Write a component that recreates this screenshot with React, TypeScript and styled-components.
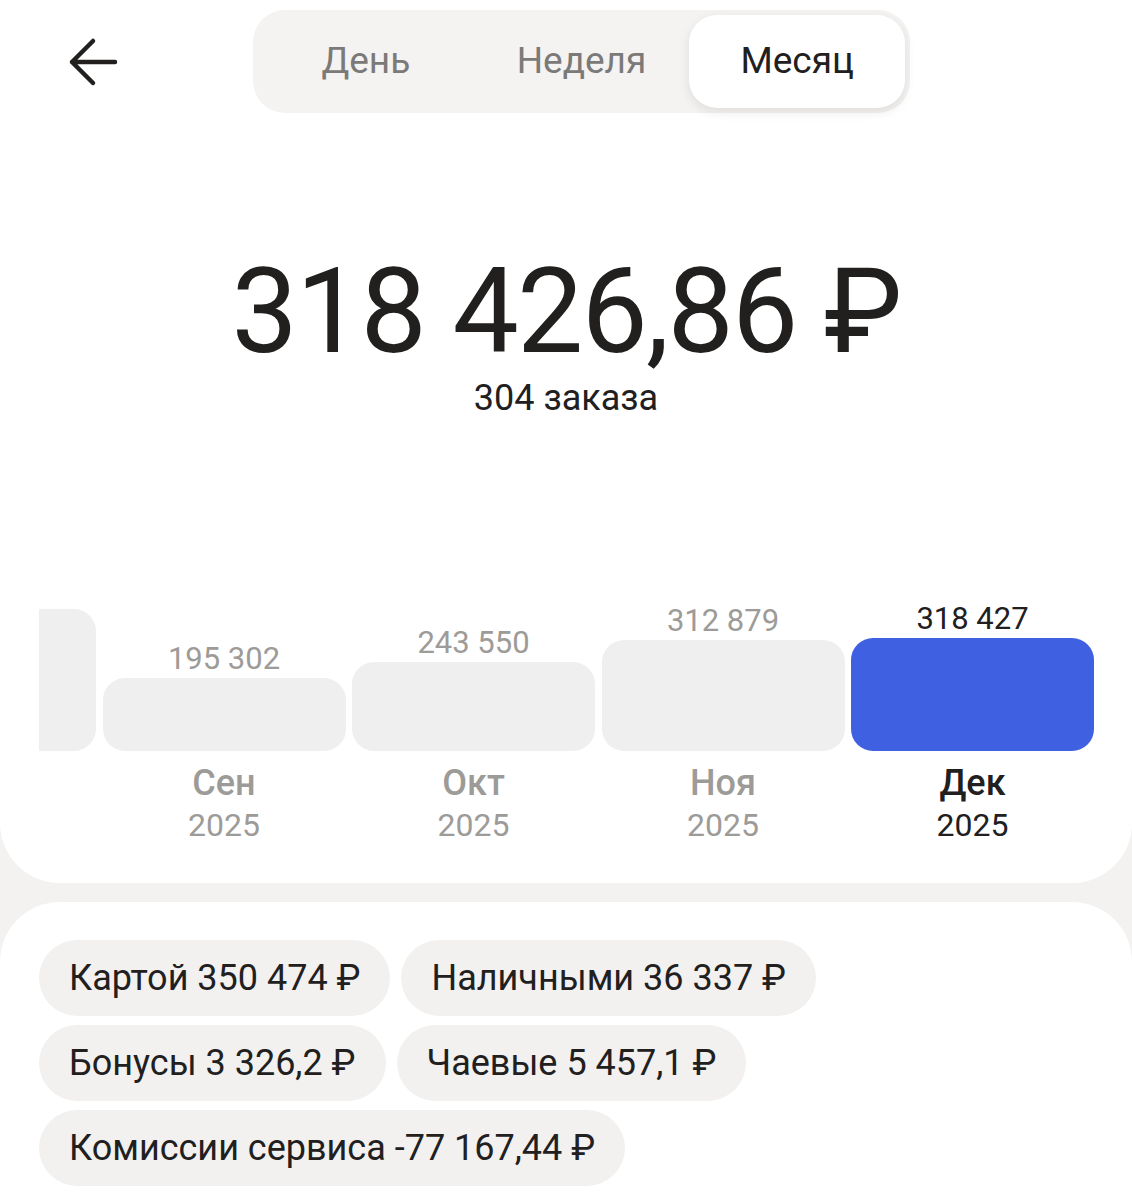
import React from "react";
import styled, { createGlobalStyle } from "styled-components";

const GlobalStyle = createGlobalStyle`
  html, body {
    margin: 0;
    padding: 0;
    background: #f3f2f0;
  }
  body {
    font-family: Roboto, "Noto Sans", "Liberation Sans", sans-serif;
    color: #21201f;
  }
  * { box-sizing: border-box; }
`;

const Page = styled.div`
  width: 1132px;
  min-height: 1200px;
  display: flex;
  flex-direction: column;
`;

const TopCard = styled.section`
  background: #ffffff;
  border-radius: 0 0 60px 60px;
  padding: 10px 0 38px;
  display: flex;
  flex-direction: column;
`;

const Header = styled.header`
  display: flex;
  align-items: center;
  padding-left: 64px;
`;

const BackButton = styled.button`
  width: 58px;
  height: 58px;
  border: 0;
  padding: 0;
  background: none;
  display: flex;
  align-items: center;
  justify-content: center;
  margin-right: 131px;
  color: #21201f;
`;

const Segmented = styled.div`
  width: 657px;
  height: 103px;
  padding: 5px;
  border-radius: 32px;
  background: #f4f3f1;
  display: grid;
  grid-template-columns: repeat(3, 1fr);
`;

const Segment = styled.div<{ $active?: boolean }>`
  display: flex;
  align-items: center;
  justify-content: center;
  padding-bottom: 3px;
  border-radius: 28px;
  font-size: 37px;
  color: ${(p) => (p.$active ? "#21201f" : "#7b7a78")};
  background: ${(p) => (p.$active ? "#ffffff" : "transparent")};
  box-shadow: ${(p) => (p.$active ? "0 4px 12px rgba(0,0,0,0.09)" : "none")};
`;

const Total = styled.div`
  margin-top: 140px;
  text-align: center;
  font-size: 118px;
  line-height: 118px;
  letter-spacing: -1.8px;
  color: #21201f;
`;

const Orders = styled.div`
  margin-top: 5px;
  text-align: center;
  font-size: 36px;
  line-height: 44px;
  color: #21201f;
`;

const ChartViewport = styled.div`
  margin: 152px 38px 0 39px;
  display: flex;
  justify-content: flex-end;
  align-items: flex-end;
  gap: 6.5px;
  overflow: hidden;
`;

const Column = styled.div`
  flex: 0 0 243px;
  display: flex;
  flex-direction: column;
  align-items: stretch;
  text-align: center;
`;

const Value = styled.div<{ $active?: boolean }>`
  font-size: 31px;
  line-height: 36px;
  min-height: 36px;
  margin-bottom: 1px;
  color: ${(p) => (p.$active ? "#21201f" : "#9d9b98")};
  white-space: nowrap;
`;

const Bar = styled.div<{ $active?: boolean }>`
  border-radius: 22px;
  background: ${(p) => (p.$active ? "#3f60e0" : "#efefef")};
`;

const Month = styled.div<{ $active?: boolean }>`
  margin-top: 10px;
  font-size: 36px;
  line-height: 44px;
  min-height: 44px;
  font-weight: 500;
  color: ${(p) => (p.$active ? "#21201f" : "#9d9b98")};
`;

const Year = styled.div<{ $active?: boolean }>`
  font-size: 32px;
  line-height: 40px;
  min-height: 40px;
  color: ${(p) => (p.$active ? "#21201f" : "#9d9b98")};
`;

const BottomCard = styled.section`
  flex: 1;
  margin-top: 19px;
  background: #ffffff;
  border-radius: 60px 60px 0 0;
  padding: 38px 39px;
`;

const Chips = styled.div`
  display: flex;
  flex-wrap: wrap;
  gap: 9px 11px;
  max-width: 820px;
`;

const Chip = styled.div`
  height: 76px;
  padding: 0 30px;
  border-radius: 38px;
  background: #f2f1ef;
  display: flex;
  align-items: center;
  font-size: 36px;
  color: #21201f;
  white-space: nowrap;
`;

const BackArrow = () => (
  <svg width="52" height="52" viewBox="0 0 52 52" fill="none">
    <path
      d="M48 26H5M26 5L5 26L26 47"
      stroke="currentColor"
      strokeWidth="4.5"
      strokeLinecap="round"
      strokeLinejoin="round"
    />
  </svg>
);

type MonthData = {
  key: string;
  value: string;
  bar: number;
  month: string;
  year: string;
  active?: boolean;
};

const months: MonthData[] = [
  { key: "aug", value: "", bar: 142, month: "", year: "" },
  { key: "sep", value: "195 302", bar: 73, month: "Сен", year: "2025" },
  { key: "oct", value: "243 550", bar: 89, month: "Окт", year: "2025" },
  { key: "nov", value: "312 879", bar: 111, month: "Ноя", year: "2025" },
  { key: "dec", value: "318 427", bar: 113, month: "Дек", year: "2025", active: true },
];

const chips = [
  "Картой 350 474 ₽",
  "Наличными 36 337 ₽",
  "Бонусы 3 326,2 ₽",
  "Чаевые 5 457,1 ₽",
  "Комиссии сервиса -77 167,44 ₽",
];

export default function App() {
  return (
    <>
      <GlobalStyle />
      <Page>
        <TopCard>
          <Header>
            <BackButton aria-label="Назад">
              <BackArrow />
            </BackButton>
            <Segmented>
              <Segment>День</Segment>
              <Segment>Неделя</Segment>
              <Segment $active>Месяц</Segment>
            </Segmented>
          </Header>
          <Total>318 426,86 ₽</Total>
          <Orders>304 заказа</Orders>
          <ChartViewport>
            {months.map((m) => (
              <Column key={m.key}>
                <Value $active={m.active}>{m.value}</Value>
                <Bar $active={m.active} style={{ height: m.bar }} />
                <Month $active={m.active}>{m.month}</Month>
                <Year $active={m.active}>{m.year}</Year>
              </Column>
            ))}
          </ChartViewport>
        </TopCard>
        <BottomCard>
          <Chips>
            {chips.map((c) => (
              <Chip key={c}>{c}</Chip>
            ))}
          </Chips>
        </BottomCard>
      </Page>
    </>
  );
}
